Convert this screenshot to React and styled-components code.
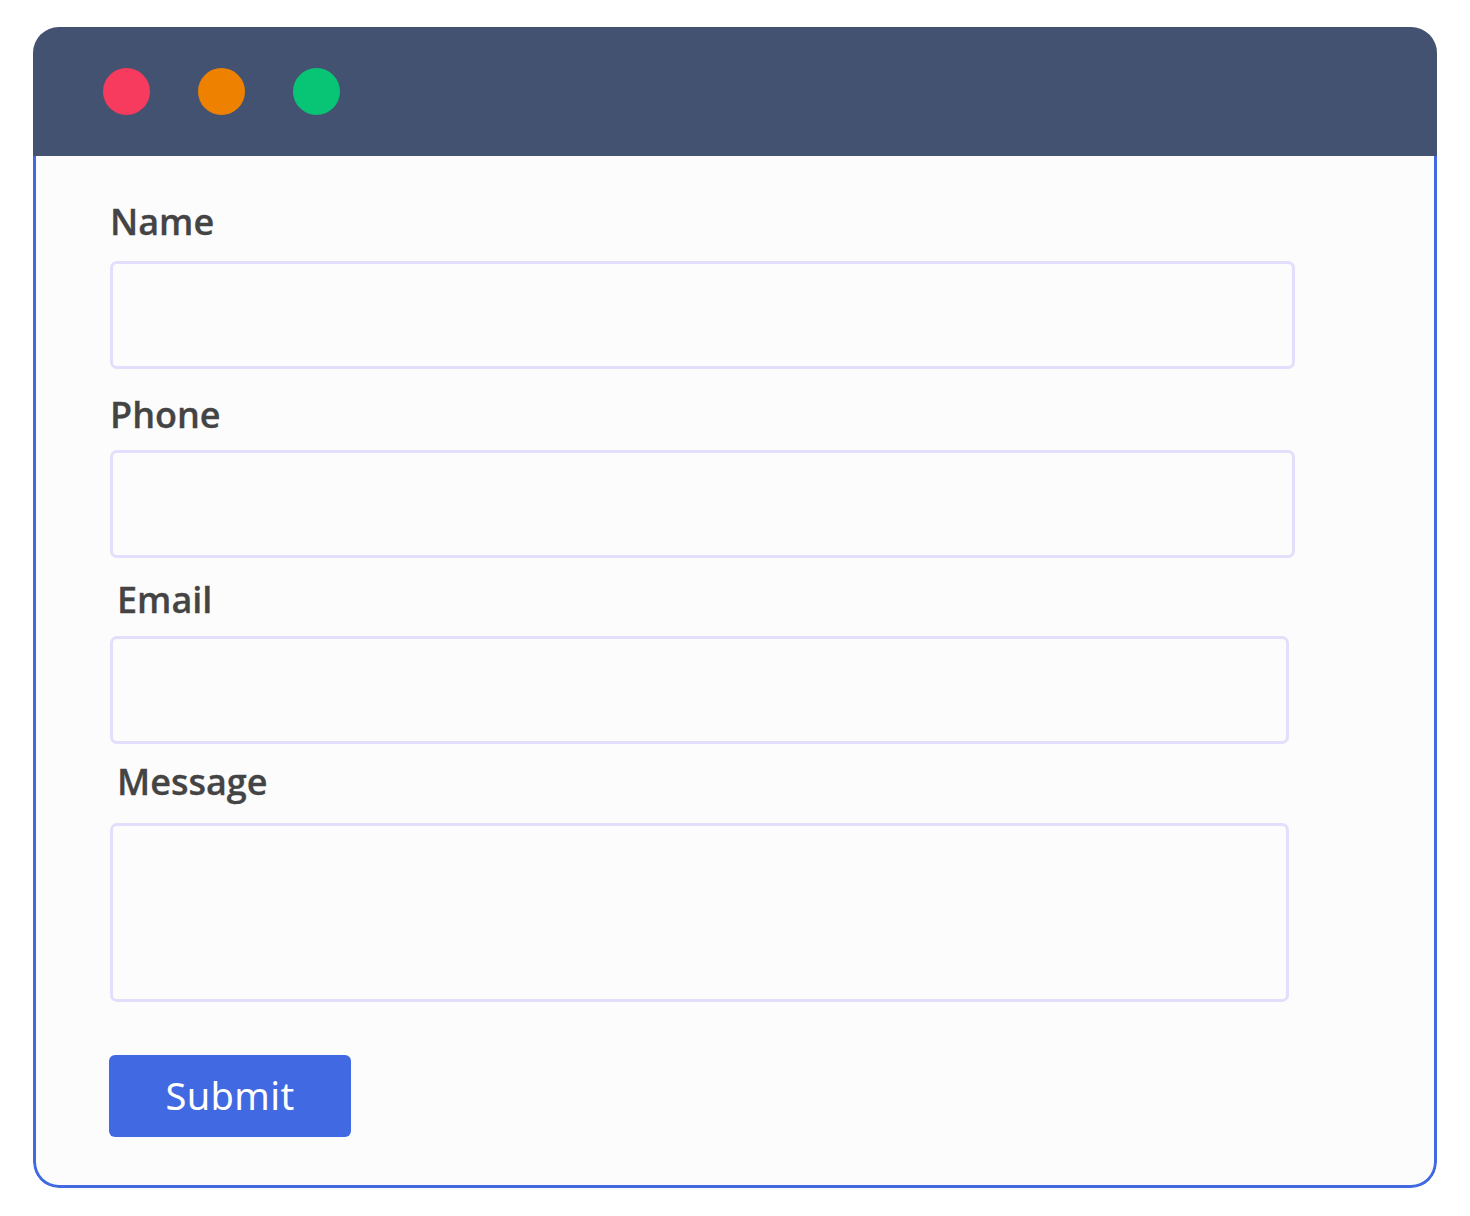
import React from "react";
import styled, { createGlobalStyle } from "styled-components";

const Global = createGlobalStyle`
  html, body { margin: 0; padding: 0; background: #ffffff; }
  body { font-family: "Open Sans", "Liberation Sans", sans-serif; }
  * { box-sizing: border-box; }
`;

const Page = styled.div`
  width: 1470px;
  height: 1216px;
  padding: 27px 33px 28px 33px;
  background: #ffffff;
`;

const Window = styled.div`
  width: 1404px;
  height: 1161px;
  display: flex;
  flex-direction: column;
  border-radius: 26px;
  overflow: hidden;
`;

const TitleBar = styled.div`
  height: 129px;
  flex: none;
  background: #435270;
  display: flex;
  align-items: flex-start;
  gap: 48px;
  padding: 41px 0 0 70px;
`;

const Dot = styled.span`
  width: 47px;
  height: 47px;
  border-radius: 50%;
  background: ${(p) => p.$color};
`;

const Body = styled.div`
  flex: 1;
  background: #fcfcfc;
  border: 3px solid #4169e1;
  border-top: none;
  border-radius: 0 0 26px 26px;
  padding: 44px 0 0 74px;
  display: flex;
  flex-direction: column;
`;

const Label = styled.label`
  display: block;
  font-family: "Open Sans", "Liberation Sans", sans-serif;
  font-weight: 600;
  font-size: 36px;
  line-height: 44px;
  height: 44px;
  color: #444444;
  margin: ${(p) => p.$top}px 0 0 ${(p) => p.$indent || 0}px;
  -webkit-text-stroke: 0.3px #444444;
`;

const Box = styled.div`
  width: ${(p) => p.$w}px;
  height: ${(p) => p.$h}px;
  margin-top: ${(p) => p.$top}px;
  border: 3px solid #e2defc;
  border-radius: 7px;
  background: #fcfcfc;
`;

const Button = styled.button`
  margin-top: 53px;
  width: 242px;
  height: 82px;
  border: none;
  border-radius: 6px;
  background: #4169e1;
  color: #ffffff;
  font-family: "Noto Sans", "Open Sans", sans-serif;
  font-size: 38px;
  font-weight: 400;
  letter-spacing: 0.4px;
  padding: 0 0 2px 0;
  margin-left: -1px;
`;

const fields = [
  { label: "Name", labelTop: 0, indent: 0, boxTop: 17, w: 1185, h: 108 },
  { label: "Phone", labelTop: 24, indent: 0, boxTop: 13, w: 1185, h: 108 },
  { label: "Email", labelTop: 20, indent: 7, boxTop: 14, w: 1179, h: 108 },
  { label: "Message", labelTop: 16, indent: 7, boxTop: 19, w: 1179, h: 179 },
];

export default function App() {
  return (
    <>
      <Global />
      <Page>
        <Window>
          <TitleBar>
            <Dot $color="#f63b5e" />
            <Dot $color="#ee8100" />
            <Dot $color="#08c575" />
          </TitleBar>
          <Body>
            {fields.map((f) => (
              <React.Fragment key={f.label}>
                <Label $top={f.labelTop} $indent={f.indent}>
                  {f.label}
                </Label>
                <Box $top={f.boxTop} $w={f.w} $h={f.h} />
              </React.Fragment>
            ))}
            <div>
              <Button>Submit</Button>
            </div>
          </Body>
        </Window>
      </Page>
    </>
  );
}
